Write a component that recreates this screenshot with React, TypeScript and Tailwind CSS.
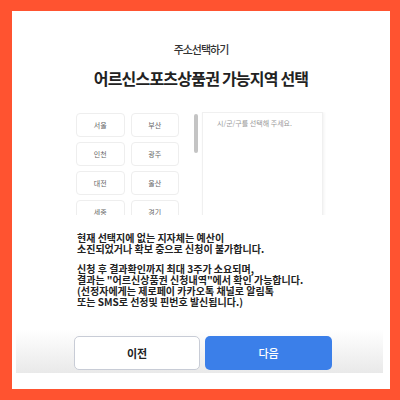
import React from "react";

const regions = ["서울", "부산", "인천", "광주", "대전", "울산", "세종", "경기"];

export default function App() {
  return (
    <div
      className="w-[400px] h-[400px] bg-[#ff5330] pt-[11px] pl-[12px] pr-[10px] pb-[11px]"
      style={{ fontFamily: '"Noto Sans CJK KR", "Noto Sans", sans-serif' }}
    >
      <div className="w-full h-full bg-white flex flex-col items-center">
        <div className="shrink-0 mt-[30px] text-[11px] leading-[16px] font-medium text-[#333] tracking-[-1px]">주소선택하기</div>
        <div className="shrink-0 mt-[10px] text-[16px] leading-[22px] font-bold text-[#222] tracking-[-0.8px]">
          어르신스포츠상품권 가능지역 선택
        </div>
        <div className="shrink-0 mt-[23px] w-full h-[103px] overflow-hidden flex pl-[64px]">
          <div className="grid grid-cols-2 gap-x-[6px] gap-y-[5px] w-[103px] pt-[1px] content-start">
            {regions.map((r) => (
              <div
                key={r}
                className="h-[24px] rounded-[4px] border border-[#eeeeee] flex items-center justify-center text-[7px] text-[#666]"
              >
                {r}
              </div>
            ))}
          </div>
          <div className="ml-[15px] w-[4px] h-[39px] mt-[2px] rounded-full bg-[#c4c4c4]" />
          <div className="ml-[4px] w-[121px] h-[110px] border border-[#f0f0f0] shadow-[1px_0_3px_rgba(0,0,0,0.06)] px-[14px] pt-[5px] text-[7px] text-[#999]">
            시/군/구를 선택해 주세요.
          </div>
        </div>
        <div className="shrink-0 mt-[17px] self-start ml-[65px] text-[10px] leading-[11px] font-semibold text-[#222] tracking-[0px]">
          <p>현재 선택지에 없는 지자체는 예산이</p>
          <p>소진되었거나 확보 중으로 신청이 불가합니다.</p>
          <p className="mt-[9px]">신청 후 결과확인까지 최대 3주가 소요되며,</p>
          <p>결과는 "어르신상품권 신청내역"에서 확인 가능합니다.</p>
          <p>(선정자에게는 제로페이 카카오톡 채널로 알림톡</p>
          <p>또는 SMS로 선정및 핀번호 발신됩니다.)</p>
        </div>
        <div className="shrink-0 mt-auto mb-[16px] w-[367px] self-start ml-[4px] h-[44px] bg-gradient-to-b from-white to-[#e9e9e9] flex justify-start items-start pl-[58px] pt-[7px] gap-[5px]">
          <button className="w-[126px] h-[34px] rounded-[5px] border border-[#c8ccd6] bg-white text-[11px] font-bold text-[#222]">
            이전
          </button>
          <button className="w-[127px] h-[34px] rounded-[5px] bg-[#3b7fe9] text-[11px] font-medium text-white">
            다음
          </button>
        </div>
      </div>
    </div>
  );
}
